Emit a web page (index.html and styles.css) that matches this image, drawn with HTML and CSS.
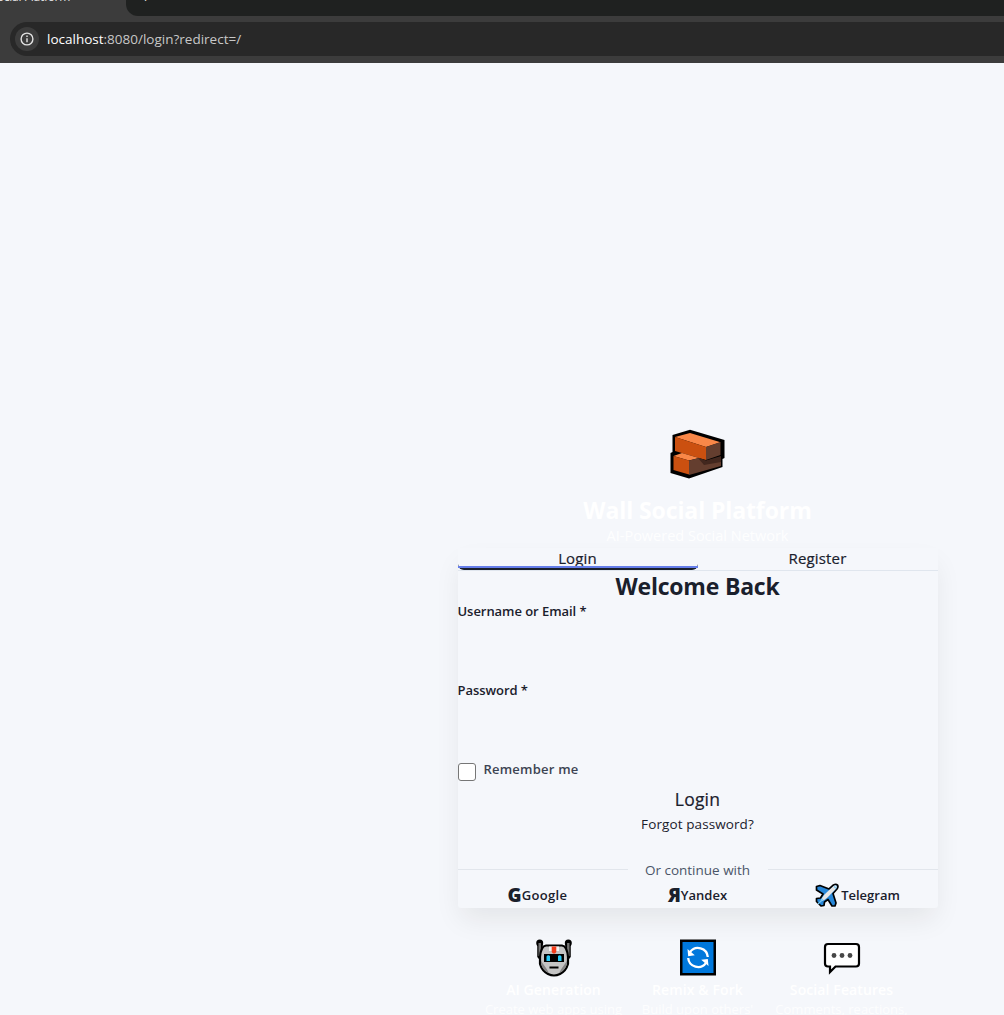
FILE: index.html
```html
<!DOCTYPE html>
<html lang="en">
<head>
<meta charset="utf-8">
<title>Wall Social Platform</title>
<link rel="stylesheet" href="styles.css">
</head>
<body>
<header class="browser">
  <div class="tabs-strip">
    <div class="browser-tab"><span>Wall Social Platform</span></div>
    <div class="strip-rest"><span>+</span></div>
  </div>
  <div class="address">
    <span class="info"><svg width="14" height="14" viewBox="0 0 14 14" fill="none" stroke="#e3e3e3" stroke-width="1.4"><circle cx="7" cy="7" r="5.9"/><path d="M7 6.2v4M7 3.6v1.4"/></svg></span>
    <span class="url"><b>localhost</b>:8080/login?redirect=/</span>
  </div>
</header>
<main class="auth">
  <svg class="brick" width="56" height="52" viewBox="0 0 56 52">
    <path d="M.5 24L2.500 23V6L20 .8L54.500 11V29L52.500 30V38L19 49.500L.5 44Z" fill="#000"/>
    <path d="M5 8L20 4L50.500 13.200L36 18Z" fill="#f98748"/>
    <path d="M5 8L36 18V31L5 22Z" fill="#cb5010"/>
    <path d="M36 18L50.500 13V26L36 31Z" fill="#643e2f"/>
    <path d="M3.500 27L12 24L29 29L19 31.500Z" fill="#f98748"/>
    <path d="M3.500 27L19 31.500V45.500L3.500 41Z" fill="#cb5010"/>
    <path d="M19 31.500L29 29L36 32L51 28V37L19 46Z" fill="#643e2f"/>
    <path d="M28 29L36 31.500L51 27V33L34 36Z" fill="#42271e"/>
  </svg>
  <h1 class="title">Wall Social Platform</h1>
  <p class="subtitle">AI-Powered Social Network</p>
  <section class="card">
    <nav class="tabs">
      <div class="tab active"><span>Login</span></div>
      <div class="tab"><span>Register</span></div>
    </nav>
    <h2 class="welcome">Welcome Back</h2>
    <div class="field user">Username or Email *</div>
    <div class="field pass">Password *</div>
    <label class="remember"><span class="box"></span><span class="remember-text">Remember me</span></label>
    <div class="submit">Login</div>
    <div class="forgot">Forgot password?</div>
    <div class="divider"><span>Or continue with</span></div>
    <div class="social">
      <div class="provider"><b>G</b><span class="google">Google</span></div>
      <div class="provider"><b>Я</b><span class="yandex">Yandex</span></div>
      <div class="provider">
        <svg class="plane" width="24" height="24" viewBox="0 0 24 24" stroke-linejoin="round">
          <path d="M1.500 3.500L5 2.500L14 6L18.500 2Q21 .8 22.600 2.200Q23.500 4 22 6L18 10.500L21 20L20 23H17L13 16.500L9.500 19L9 22.500L6 23L1.500 18.500V15.500L5.500 15L8 11L1.500 7Z" fill="#2787d8" stroke="#000" stroke-width="1.700"/>
          <path d="M5.500 18.500Q6 15.500 9.500 11.500L18.500 3Q20.500 1.700 21.600 2.900Q22.300 4 21 5.800L12.500 14.500Q9 18 5.500 18.500Z" fill="#e6e6e6"/>
          <path d="M19 3.400l2 2M3 21l5-5" stroke="#75c7f5" stroke-width="1.300"/>
        </svg><span class="telegram">Telegram</span></div>
    </div>
  </section>
  <section class="features">
    <div class="feature">
      <svg width="36" height="38" viewBox="0 0 36 38">
        <path d="M4 3.500V17L6.500 20M32 3.500V17L29.500 20" fill="none" stroke="#000" stroke-width="5.500"/>
        <circle cx="3.700" cy="4" r="3.500"/><circle cx="32.300" cy="4" r="3.500"/>
        <path d="M3.700 4V17M32.300 4V17" stroke="#777" stroke-width="2.400"/>
        <path d="M10 6.500H26Q31 7 32 18V25Q30 32 24 35Q18 38 12 35Q6 32 4 25V18Q5 7 10 6.500Z" fill="#c4c4c4" stroke="#000" stroke-width="2.200"/>
        <path d="M5 22L10 29L13 34Q7 32 5 25ZM31 22L26 29L23 34Q29 32 31 25Z" fill="#858585"/>
        <path d="M13 7.500H23V12H13Z" fill="#f4f4f4"/><path d="M15.700 7.500H20.300V13L19 14.500H17L15.700 13Z" fill="#f33b19"/>
        <path d="M8 15H28V23H8Z"/><path d="M10.500 17.500Q12 15.500 14 17V22H10.500ZM22 17Q24 15.500 25.500 17.500V22H22Z" fill="#27c9f5"/>
        <path d="M13.500 27.500h9v2h-9z"/>
      </svg>
      <h3 class="f1">AI Generation</h3><p class="d1">Create web apps using</p>
    </div>
    <div class="feature">
      <svg width="36" height="38" viewBox="0 0 36 38">
        <path d="M0 .5H36V36.500H0Z"/><path d="M2.500 3H33.500V34H2.500Z" fill="#0078dc"/>
        <path d="M27.800 18A9.800 9.800 0 0 0 10 13.200M8.200 19A9.800 9.800 0 0 0 26 23.800" fill="none" stroke="#fff" stroke-width="2.300"/>
        <path d="M7.500 10L8.200 17.200L14.800 16.300ZM28.500 27L27.800 20L21.200 20.800Z" fill="#fff"/>
      </svg>
      <h3 class="f2">Remix &amp; Fork</h3><p class="d2">Build upon others'</p>
    </div>
    <div class="feature">
      <svg width="38" height="38" viewBox="0 0 38 38">
        <path d="M5 5H33Q36 5 36 8V24.500Q36 27.500 33 27.500H12.500L7 33V27.500H5Q2 27.500 2 24.500V8Q2 5 5 5Z" fill="#fff" stroke="#000" stroke-width="2.200"/>
        <g fill="#464646"><circle cx="11" cy="16.500" r="2.400"/><circle cx="19" cy="16.500" r="2.400"/><circle cx="27" cy="16.500" r="2.400"/></g>
      </svg>
      <h3 class="f3">Social Features</h3><p class="d3">Comments, reactions,</p>
    </div>
  </section>
</main>
</body>
</html>
```
FILE: styles.css
```css
* { box-sizing: border-box; margin: 0; padding: 0; }
body {
  height: 1015px;
  overflow: hidden;
  background: #f5f7fb;
  color: #1a202c;
  font-family: "Open Sans", "Noto Sans", sans-serif;
  font-size: 14px;
}
.browser { height: 63px; background: #3c3c3c; color: #e3e3e3; }
.tabs-strip { display: flex; height: 16px; overflow: hidden; }
.browser-tab { width: 126px; display: flex; justify-content: flex-end; padding-right: 56px; font-size: 12px; line-height: 16px; white-space: nowrap; }
.browser-tab span { margin-top: -11px; letter-spacing: -.3px; }
.strip-rest { flex: 1; background: #1f2120; border-bottom-left-radius: 12px; padding-left: 15px; }
.strip-rest span { display: block; margin-top: -11px; font-size: 16px; line-height: 16px; }
.address { display: flex; align-items: center; gap: 8px; height: 34px; margin: 6px 0 0 10px; padding-left: 5px; background: #282828; border-radius: 17px 0 0 17px; }
.info { display: flex; align-items: center; justify-content: center; width: 24px; height: 24px; border-radius: 50%; background: #3c3c3c; }
.url { font-size: 13.500px; color: #c7c7c7; letter-spacing: 0; }
.url b { font-weight: 400; color: #fff; }

.auth { width: 480px; margin-left: 457.500px; padding-top: 366px; text-align: center; white-space: nowrap; }
.brick { display: block; margin: 0 auto; }
.title { margin-top: 15px; height: 30px; line-height: 29px; font-size: 23px; font-weight: 700; letter-spacing: -.1px; color: #fff; }
.subtitle { height: 22px; line-height: 20px; font-size: 14.500px; color: rgba(255, 255, 255, .9); }
.card { height: 360px; border-radius: 0 0 3px 3px; background: #f5f7fb; box-shadow: 0 14px 26px -3px rgba(0, 0, 0, .08); }
.tabs { display: flex; height: 23px; border-bottom: 1px solid #e0e6ee; }
.tab { flex: 1; height: 22px; font-size: 15px; font-weight: 500; line-height: 20px; letter-spacing: .15px; -webkit-text-stroke: .2px #1a202c; }
.active { position: relative; border-bottom: 2px solid #1a202c; border-radius: 0 0 6px 6px; }
.active::after { content: ""; position: absolute; left: 0; right: 0; bottom: 0; height: 2px; background: #667eea; }
.welcome { height: 30px; line-height: 31px; font-size: 23px; font-weight: 700; letter-spacing: -.2px; }
.field { height: 79px; line-height: 20px; text-align: left; font-size: 13px; font-weight: 600; letter-spacing: -.05px; }
.remember { display: flex; gap: 8px; height: 30px; color: #3c4352; line-height: 20px; font-size: 13px; font-weight: 600; letter-spacing: .22px; }
.box { width: 18px; height: 18px; margin-top: 4px; border: 1px solid #767676; border-radius: 3px; background: #fff; }
.submit { height: 25px; line-height: 20px; font-size: 17.500px; font-weight: 500; letter-spacing: .2px; -webkit-text-stroke: .2px #1a202c; }
.forgot { height: 42px; line-height: 20px; font-size: 13.500px; letter-spacing: .1px; }
.divider { display: flex; align-items: center; height: 24px; margin-top: 1px; color: #4a5568; font-size: 13.500px; }
.divider::before, .divider::after { content: ""; flex: 1; height: 1px; background: #e2e6ec; }
.divider span { width: 140px; line-height: 24px; padding-top: 1px; }
.social { display: grid; grid-template-columns: repeat(3, 1fr); height: 27px; font-size: 13px; font-weight: 600; }
.provider { display: flex; align-items: center; justify-content: center; height: 27px; line-height: 20px; }
.provider b { font-size: 19px; line-height: 24px; }
.google { letter-spacing: .35px; }
.plane { margin-right: 2px; }
.features { display: grid; grid-template-columns: repeat(3, 144px); justify-content: center; height: 120px; padding-top: 31px; background: rgba(255, 255, 255, .06); color: #fff; }
.feature svg { display: block; margin: 0 auto; }
.feature h3 { height: 20px; margin-top: 3px; line-height: 20px; font-size: 14px; font-weight: 600; letter-spacing: .1px; }
.feature p { line-height: 19px; font-size: 13px; color: rgba(255, 255, 255, .85); }
```
